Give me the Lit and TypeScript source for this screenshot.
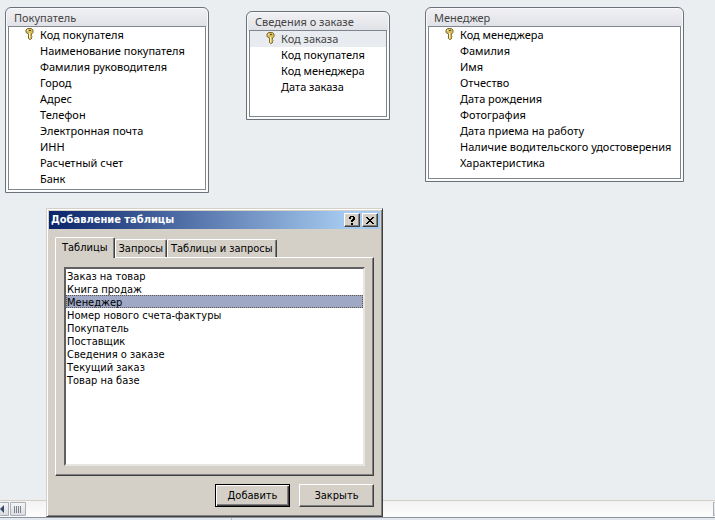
import { LitElement, html, css, svg } from "lit";
import { customElement, property, state } from "lit/decorators.js";
import { classMap } from "lit/directives/class-map.js";

const keyIcon = html`<svg class="key" width="9" height="12" viewBox="0 0 9 12" aria-hidden="true">
  ${svg`<path d="M2.500 .5h4l1.500 1.500v2.500L6.500 6v1.500l.5 1-.5 1 .5.500-1.500 1.500h-1l-1-1V6L1 4.500V2z" fill="#d8bd5c" stroke="#7d6830"/>
  <path d="M2 2.500h1M4.500 5v5" stroke="#fbf1b0" fill="none"/>
  <path d="M4 2.500h2" stroke="#5d4a18"/>`}
</svg>`;

@customElement("field-table")
class FieldTable extends LitElement {
  @property() heading = "";
  @property({ attribute: false }) fields: string[] = [];
  @property({ type: Boolean }) current = false;

  static styles = css`
    :host {
      display: flex;
      flex-direction: column;
      box-sizing: border-box;
      padding: 2px;
      border: 1px solid #6c727a;
      border-radius: 6px 6px 0 0;
      background: linear-gradient(#f1f1f4, #e1e2e7 18px, #fff 19px);
      box-shadow: inset 0 0 0 1px #f8f9fb;
      font: 11px/16px "Noto Sans", "Open Sans", sans-serif;
      color: #000;
    }
    h2 {
      margin: 0;
      padding: 0 6px;
      font: inherit;
      color: #444;
    }
    ul {
      flex: 1;
      margin: 0;
      padding: 0 0 2px;
      list-style: none;
      border: 1px solid #80868e;
      background: #fff;
    }
    li {
      display: grid;
      grid-template-columns: 16px 1fr;
      padding-left: 15px;
      white-space: nowrap;
      height: 16px;
    }
    .name {
      grid-column: 2;
    }
    .key {
      grid-row: 1;
      margin: 1px 0 0 1px;
    }
    .current {
      background: #e8ebf0;
      color: #444;
    }
  `;

  render() {
    return html`
      <h2>${this.heading}</h2>
      <ul>
        ${this.fields.map(
          (f, i) => html`<li class=${classMap({ current: this.current && i === 0 })}>
            ${i === 0 ? keyIcon : ""}<span class="name">${f}</span>
          </li>`
        )}
      </ul>
    `;
  }
}

@customElement("add-table-dialog")
class AddTableDialog extends LitElement {
  @state() tab = 0;

  tabs = ["Таблицы", "Запросы", "Таблицы и запросы"];
  items = [
    "Заказ на товар",
    "Книга продаж",
    "Менеджер",
    "Номер нового счета-фактуры",
    "Покупатель",
    "Поставщик",
    "Сведения о заказе",
    "Текущий заказ",
    "Товар на базе",
  ];

  static styles = css`
    :host {
      display: flex;
      flex-direction: column;
      box-sizing: border-box;
      padding: 2px;
      border: 1px solid;
      border-color: #d4d0c8 #404040 #404040 #d4d0c8;
      background: #d4d0c8;
      box-shadow: inset 1px 1px #fff, inset -1px -1px #808080;
      font: 11px/13px "DejaVu Sans Condensed", "DejaVu Sans", sans-serif;
      color: #000;
    }
    button {
      box-sizing: border-box;
      margin: 0;
      padding: 0;
      border-radius: 0;
      background: #d4d0c8;
      font: inherit;
      color: inherit;
    }
    header {
      display: flex;
      align-items: center;
      gap: 2px;
      height: 18px;
      padding: 0 2px;
      background: linear-gradient(90deg, #0a246a, #a6caf0 90%);
    }
    h1 {
      flex: 1;
      margin: 0;
      font: bold 11px/18px "DejaVu Sans Condensed", "DejaVu Sans", sans-serif;
      color: #fff;
    }
    .raised {
      border: 1px solid;
      border-color: #fff #404040 #404040 #fff;
      box-shadow: inset -1px -1px #808080;
    }
    .caption {
      display: grid;
      place-items: center;
      width: 16px;
      height: 14px;
    }
    .body {
      flex: 1;
      display: flex;
      flex-direction: column;
      padding: 8px 6px 7px;
    }
    .tabs {
      display: flex;
      align-items: flex-end;
      height: 20px;
    }
    .tab {
      height: 18px;
      padding: 0 3px;
      border: 1px solid;
      border-color: #fff #404040 transparent #fff;
      border-bottom: 0;
      border-radius: 2px 2px 0 0;
      box-shadow: inset -1px 0 #808080;
      white-space: nowrap;
    }
    .tab.active {
      position: relative;
      height: 21px;
      margin-bottom: -1px;
      padding: 0 6px 2px;
    }
    .panel {
      flex: 1;
      display: flex;
      padding: 9px 8px;
    }
    select {
      flex: 1;
      min-width: 0;
      height: 199px;
      box-sizing: border-box;
      margin: 0;
      padding: 0;
      border: 2px solid;
      border-color: #606060 #e8e6e0 #e8e6e0 #606060;
      border-radius: 0;
      background: #fff;
      font: inherit;
      outline: none;
      overflow: hidden;
      scrollbar-width: none;
    }
    option {
      box-sizing: border-box;
      height: 13px;
      min-height: 13px;
      padding: 1px 1px 0;
      font: inherit;
      line-height: 13px;
      color: #000;
    }
    option:checked {
      background: #9fa8c5 linear-gradient(#9fa8c5, #9fa8c5);
      color: #000 !important;
      outline: 1px dotted #5a5648;
      outline-offset: -1px;
    }
    footer {
      display: flex;
      justify-content: flex-end;
      gap: 9px;
      padding-top: 8px;
    }
    .push {
      width: 75px;
      height: 23px;
    }
    .default {
      border-color: #000;
      box-shadow: inset 1px 1px #fff, inset -1px -1px #404040, inset -2px -2px #808080;
    }
  `;

  render() {
    return html`
      <header>
        <h1>Добавление таблицы</h1>
        <button class="caption raised" aria-label="Справка">
          <svg width="8" height="9" viewBox="0 0 8 9"><path d="M1 1h1V0h4v1h1v3H6v1H5v1H3V4h1V3h1V1H3v2H1zM3 7h2v2H3z" /></svg>
        </button>
        <button class="caption raised" aria-label="Закрыть окно">
          <svg width="8" height="7" viewBox="0 0 8 7"><path d="M0 0h2v1h1v1h2V1h1V0h2v1H7v1H6v1H5v1h1v1h1v1h1v1H6V6H5V5H3v1H2v1H0V6h1V5h1V4h1V3H2V2H1V1H0z" /></svg>
        </button>
      </header>
      <div class="body">
        <div class="tabs" role="tablist">
          ${this.tabs.map(
            (t, i) => html`<button
              role="tab"
              aria-selected=${i === this.tab}
              class=${classMap({ tab: true, active: i === this.tab })}
              @click=${() => (this.tab = i)}
            >${t}</button>`
          )}
        </div>
        <div class="panel raised" role="tabpanel">
          <select size="15" aria-label="Таблицы">
            ${this.items.map((n) => html`<option ?selected=${n === "Менеджер"}>${n}</option>`)}
          </select>
        </div>
        <footer>
          <button class="push raised default">Добавить</button>
          <button class="push raised">Закрыть</button>
        </footer>
      </div>
    `;
  }
}

@customElement("app-root")
class AppRoot extends LitElement {
  static styles = css`
    :host {
      display: flex;
      flex-direction: column;
      position: relative;
      min-height: 100vh;
      overflow: hidden;
      background: #eaeef1;
    }
    main {
      flex: 1;
    }
    field-table,
    add-table-dialog {
      position: absolute;
    }
    .customer {
      left: 5px;
      top: 7px;
      width: 204px;
      height: 186px;
    }
    .order {
      left: 246px;
      top: 11px;
      width: 144px;
      height: 109px;
    }
    .manager {
      left: 425px;
      top: 7px;
      width: 259px;
      height: 175px;
    }
    add-table-dialog {
      left: 46px;
      top: 208px;
      width: 337px;
    }
    .scroll {
      display: flex;
      gap: 1px;
      height: 16px;
      border-top: 1px solid #d4d0c8;
      border-bottom: 1px solid #8b93a0;
      background: linear-gradient(#f3f3f3, #fdfdfd);
    }
    .scroll button {
      display: grid;
      place-items: center;
      box-sizing: border-box;
      height: 14px;
      margin: 1px 0;
      padding: 0;
      border: 1px solid #a9adb5;
      border-radius: 1px;
      background: linear-gradient(#f4f5f7, #d9dce1);
    }
    .scroll .left {
      width: 9px;
      border-left: 0;
      place-items: center start;
    }
    .scroll .thumb {
      width: 16px;
    }
    .scroll .right {
      width: 2px;
      margin-left: auto;
      border-right: 0;
    }
    .status {
      display: flex;
      height: 2px;
      background: #e3e8ef;
    }
    .status span {
      width: 231px;
      border-right: 1px solid #b5bcc7;
    }
  `;

  render() {
    return html`
      <main>
        <field-table
          class="customer"
          heading="Покупатель"
          .fields=${["Код покупателя", "Наименование покупателя", "Фамилия руководителя", "Город", "Адрес", "Телефон", "Электронная почта", "ИНН", "Расчетный счет", "Банк"]}
        ></field-table>
        <field-table
          class="order"
          heading="Сведения о заказе"
          current
          .fields=${["Код заказа", "Код покупателя", "Код менеджера", "Дата заказа"]}
        ></field-table>
        <field-table
          class="manager"
          heading="Менеджер"
          .fields=${["Код менеджера", "Фамилия", "Имя", "Отчество", "Дата рождения", "Фотография", "Дата приема на работу", "Наличие водительского удостоверения", "Характеристика"]}
        ></field-table>
      </main>
      <div class="scroll">
        <button class="left" aria-label="Влево">
          <svg width="5" height="8" viewBox="0 0 5 8"><path d="M4 0v8L0 4z" fill="#3a4a6b" /></svg>
        </button>
        <button class="thumb" aria-label="Полоса прокрутки">
          <svg width="8" height="7" viewBox="0 0 8 7"><path d="M.5 0v7M2.500 0v7M4.500 0v7M6.500 0v7" stroke="#7d828b" /></svg>
        </button>
        <button class="right" aria-label="Вправо"></button>
      </div>
      <div class="status"><span></span></div>
      <add-table-dialog></add-table-dialog>
    `;
  }
}
